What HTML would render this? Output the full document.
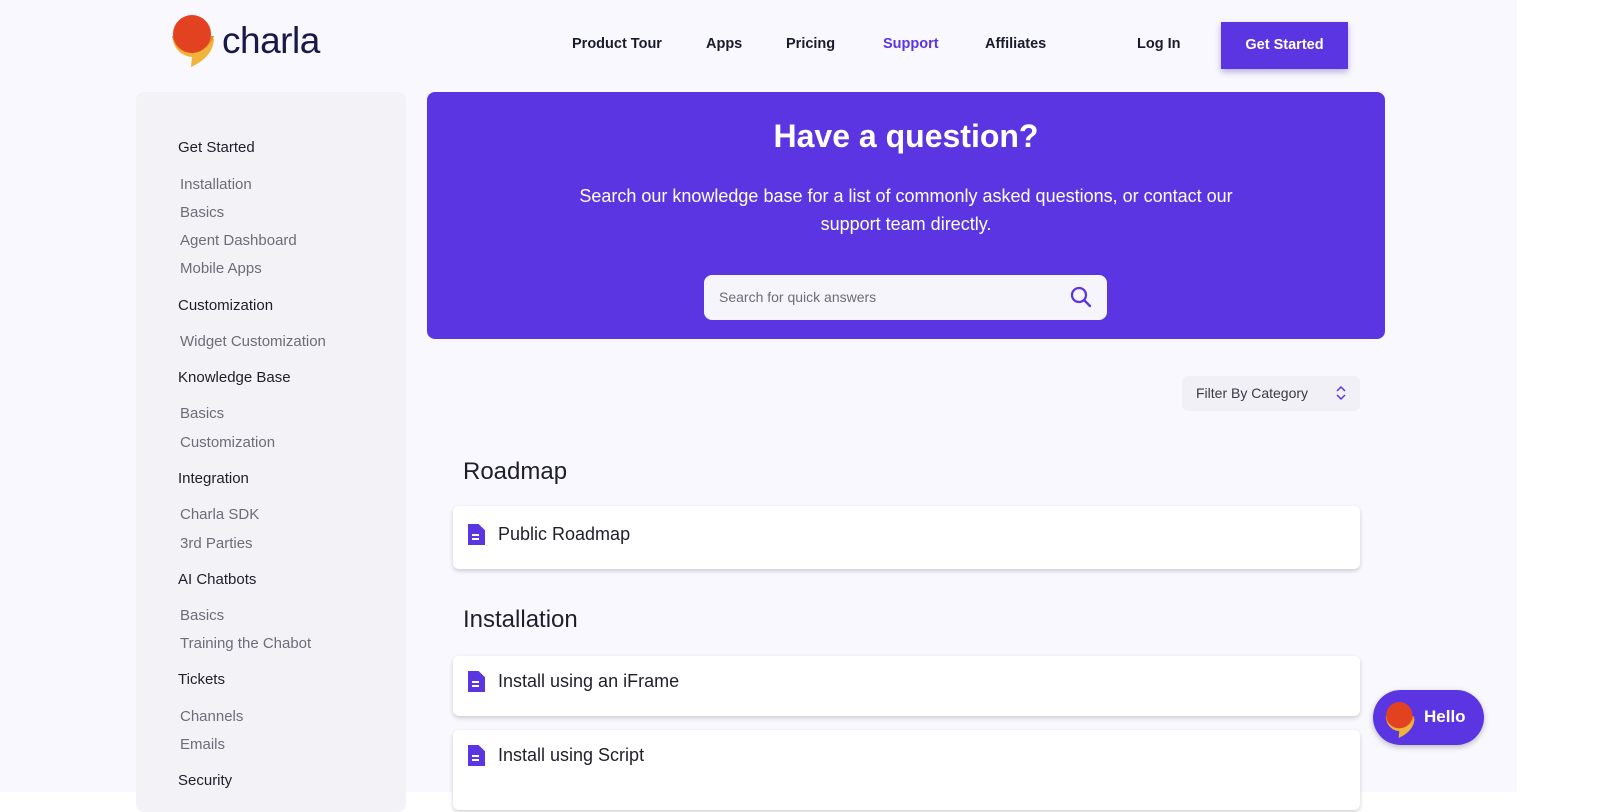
<!DOCTYPE html>
<html><head><meta charset="utf-8"><style>
*{box-sizing:border-box;margin:0;padding:0}
body{width:1600px;height:792px;overflow:hidden;background:#fff;font-family:"Liberation Sans",sans-serif;position:relative}
.page{position:absolute;left:0;top:0;width:1517px;height:792px;background:#f9f8fe}
.a{position:absolute;white-space:nowrap}
.nav{font-size:14.5px;font-weight:bold;color:#1b1b2e;top:36px}
.side{position:absolute;left:136px;top:92px;width:270px;height:720px;background:#f2f2f7;border-radius:8px}
.h{font-size:15px;color:#1f1f2a;left:178px}
.s{font-size:15px;color:#6d6d78;left:180px}
.banner{position:absolute;left:427px;top:92px;width:958px;height:247px;background:#5c35e3;border-radius:8px}
.card{position:absolute;left:453px;width:907px;background:#fff;border-radius:6px;box-shadow:0 2px 4px rgba(0,0,0,.18)}
.card span{position:absolute;left:45px;font-size:18px;color:#1f1f2a}
.doc{position:absolute;left:15px;width:17px;height:21px;background:#5c35e3;clip-path:polygon(0 0,62% 0,100% 30%,100% 100%,0 100%)}
.doc:after{content:"";position:absolute;left:4px;top:10px;width:7px;height:2px;background:#fff;box-shadow:0 4px 0 -0px #fff}
</style></head><body>
<div class="page"></div>
<svg class="a" style="left:170px;top:15px" width="46" height="52" viewBox="0 0 46 52"><path d="M3 24 A20 20 0 0 0 22 42 L21 52 Q43 42 44 24 Z" fill="#f2b33a"/><path d="M2 21 A20 20 0 0 0 24 38 Q36 36 43 24 L44 21 Z" fill="#ec8a2c"/><circle cx="22" cy="19" r="19" fill="#e2421f"/></svg>
<div class="a" style="left:222px;top:20px;font-size:37px;color:#18184a;letter-spacing:-0.5px">charla</div>
<div class="a nav" style="left:572px">Product Tour</div>
<div class="a nav" style="left:706px">Apps</div>
<div class="a nav" style="left:786px">Pricing</div>
<div class="a nav" style="left:883px;color:#5c35e3">Support</div>
<div class="a nav" style="left:985px">Affiliates</div>
<div class="a nav" style="left:1137px">Log In</div>
<div class="a" style="left:1221px;top:22px;width:127px;height:47px;background:#5c35e3;color:#fff;font-size:14.5px;font-weight:bold;text-align:center;line-height:47px;box-shadow:0 3px 6px rgba(60,40,160,.35)">Get Started</div>
<div class="side"></div>
<div class="a h" style="top:139px">Get Started</div>
<div class="a s" style="top:176px">Installation</div>
<div class="a s" style="top:204px">Basics</div>
<div class="a s" style="top:232px">Agent Dashboard</div>
<div class="a s" style="top:260px">Mobile Apps</div>
<div class="a h" style="top:297px">Customization</div>
<div class="a s" style="top:333px">Widget Customization</div>
<div class="a h" style="top:369px">Knowledge Base</div>
<div class="a s" style="top:405px">Basics</div>
<div class="a s" style="top:434px">Customization</div>
<div class="a h" style="top:470px">Integration</div>
<div class="a s" style="top:506px">Charla SDK</div>
<div class="a s" style="top:535px">3rd Parties</div>
<div class="a h" style="top:571px">AI Chatbots</div>
<div class="a s" style="top:607px">Basics</div>
<div class="a s" style="top:635px">Training the Chabot</div>
<div class="a h" style="top:671px">Tickets</div>
<div class="a s" style="top:708px">Channels</div>
<div class="a s" style="top:736px">Emails</div>
<div class="a h" style="top:772px">Security</div>
<div class="banner"></div>
<div class="a" style="left:427px;width:958px;text-align:center;top:118px;font-size:32px;font-weight:bold;color:#fff">Have a question?</div>
<div class="a" style="left:427px;width:958px;text-align:center;top:182px;font-size:18px;line-height:28px;color:#fff;white-space:normal;padding:0 140px">Search our knowledge base for a list of commonly asked questions, or contact our support team directly.</div>
<div class="a" style="left:704px;top:275px;width:403px;height:45px;background:#f6f5fb;border-radius:8px"></div>
<div class="a" style="left:719px;top:289px;font-size:14px;color:#6d6d78">Search for quick answers</div>
<svg class="a" style="left:1069px;top:285px" width="24" height="24" viewBox="0 0 24 24"><circle cx="10" cy="10" r="7" fill="none" stroke="#5c35e3" stroke-width="2.3"/><path d="M15 15 L21 21" stroke="#5c35e3" stroke-width="2.3" stroke-linecap="round"/></svg>
<div class="a" style="left:1182px;top:376px;width:178px;height:35px;background:#f1f0f6;border-radius:6px"></div>
<div class="a" style="left:1196px;top:385px;font-size:14px;color:#3a3a44">Filter By Category</div>
<svg class="a" style="left:1334px;top:384px" width="14" height="18" viewBox="0 0 14 18"><path d="M3 7 L7 3 L11 7 M3 11 L7 15 L11 11" fill="none" stroke="#5c35e3" stroke-width="1.5"/></svg>
<div class="a" style="left:463px;top:458px;font-size:24px;color:#1f1f2a">Roadmap</div>
<div class="card" style="top:506px;height:63px"><div class="doc" style="top:18px"></div><span style="top:18px">Public Roadmap</span></div>
<div class="a" style="left:463px;top:606px;font-size:24px;color:#1f1f2a">Installation</div>
<div class="card" style="top:656px;height:60px"><div class="doc" style="top:15px"></div><span style="top:15px">Install using an iFrame</span></div>
<div class="card" style="top:730px;height:80px"><div class="doc" style="top:15px"></div><span style="top:15px">Install using Script</span></div>
<div class="a" style="left:1373px;top:690px;width:111px;height:55px;background:#5c35e3;border-radius:28px;box-shadow:0 2px 6px rgba(0,0,0,.25)"></div>
<svg class="a" style="left:1384px;top:702px" width="32" height="36" viewBox="0 0 46 52"><path d="M3 24 A20 20 0 0 0 22 42 L21 52 Q43 42 44 24 Z" fill="#f2b33a"/><path d="M2 21 A20 20 0 0 0 24 38 Q36 36 43 24 L44 21 Z" fill="#ec8a2c"/><circle cx="22" cy="19" r="19" fill="#e2421f"/></svg>
<div class="a" style="left:1424px;top:707px;font-size:17px;font-weight:bold;color:#fff">Hello</div>
</body></html>
